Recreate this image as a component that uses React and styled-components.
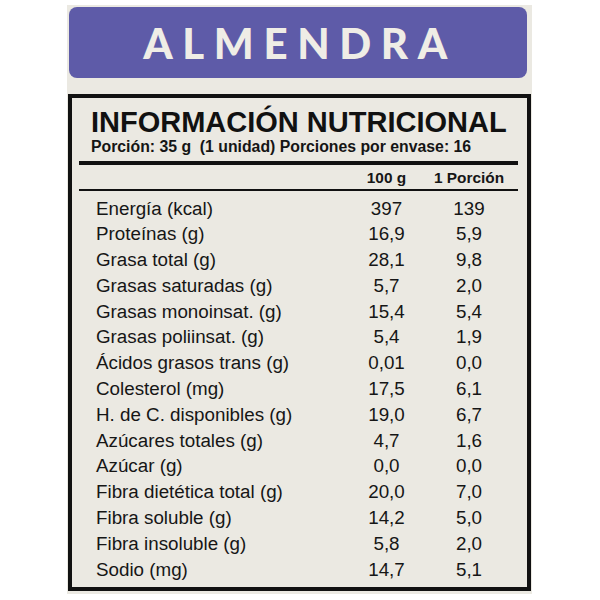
import React from "react";
import styled, { createGlobalStyle } from "styled-components";

const Global = createGlobalStyle`
  html, body { margin: 0; padding: 0; background: #ffffff; }
  body { font-family: "Liberation Sans", Arial, sans-serif; }
`;

const Card = styled.div`
  box-sizing: border-box;
  margin: 5px 0 0 67px;
  width: 465px;
  height: 589px;
  background: #ebe9e2;
  padding: 2px 0 3px 0;
  display: flex;
  flex-direction: column;
`;

const Banner = styled.div`
  box-sizing: border-box;
  margin-left: 2px;
  width: 458px;
  height: 71px;
  background: #5e5ba8;
  border-radius: 8px;
  display: flex;
  align-items: center;
  justify-content: center;
  padding-left: 4px;
`;

const BannerTitle = styled.h1`
  margin: 0;
  font-family: Lato, "Open Sans", sans-serif;
  font-weight: 900;
  font-size: 42px;
  line-height: 1;
  letter-spacing: 9.6px;
  color: #efede6;
`;

const Panel = styled.section`
  box-sizing: border-box;
  margin: 16px 0 0 1px;
  width: 463px;
  height: 497px;
  border: 4px solid #111111;
  color: #161616;
  display: flex;
  flex-direction: column;
`;

const Title = styled.h2`
  margin: 8px 0 0 19px;
  font-size: 29px;
  line-height: 32px;
  font-weight: 700;
  color: #111111;
`;

const Serving = styled.p`
  margin: 0 0 0 19px;
  font-size: 15.8px;
  line-height: 18px;
  font-weight: 700;
  white-space: pre;
  color: #151515;
`;

const Table = styled.div`
  margin: 5px 9px 0 7px;
  display: flex;
  flex-direction: column;
`;

const Rule = styled.div`
  height: ${(p) => p.$weight}px;
  background: #111111;
`;

const Grid = styled.div`
  display: grid;
  grid-template-columns: 1fr 67px 98px;
  align-items: center;
`;

const HeadRow = styled(Grid)`
  padding-top: 1.5px;
  font-size: 15.4px;
  line-height: 22px;
  font-weight: 700;
`;

const Body = styled.div`
  padding-top: 5px;
  display: flex;
  flex-direction: column;
`;

const Row = styled(Grid)`
  height: 25.8px;
  font-size: 18.8px;
  line-height: 25.8px;
`;

const Label = styled.span`
  padding-left: 17px;
  white-space: nowrap;
`;

const Num = styled.span`
  text-align: center;
  white-space: nowrap;
`;

const rows = [
  ["Energía (kcal)", "397", "139"],
  ["Proteínas (g)", "16,9", "5,9"],
  ["Grasa total (g)", "28,1", "9,8"],
  ["Grasas saturadas (g)", "5,7", "2,0"],
  ["Grasas monoinsat. (g)", "15,4", "5,4"],
  ["Grasas poliinsat. (g)", "5,4", "1,9"],
  ["Ácidos grasos trans (g)", "0,01", "0,0"],
  ["Colesterol (mg)", "17,5", "6,1"],
  ["H. de C. disponibles (g)", "19,0", "6,7"],
  ["Azúcares totales (g)", "4,7", "1,6"],
  ["Azúcar (g)", "0,0", "0,0"],
  ["Fibra dietética total (g)", "20,0", "7,0"],
  ["Fibra soluble (g)", "14,2", "5,0"],
  ["Fibra insoluble (g)", "5,8", "2,0"],
  ["Sodio (mg)", "14,7", "5,1"],
];

export default function App() {
  return (
    <>
      <Global />
      <Card>
        <Banner>
          <BannerTitle>ALMENDRA</BannerTitle>
        </Banner>
        <Panel>
          <Title>INFORMACIÓN NUTRICIONAL</Title>
          <Serving>{"Porción: 35 g  (1 unidad) Porciones por envase: 16"}</Serving>
          <Table>
            <Rule $weight={4} />
            <HeadRow>
              <span />
              <Num>100 g</Num>
              <Num>1 Porción</Num>
            </HeadRow>
            <Rule $weight={2} />
            <Body>
              {rows.map(([label, a, b]) => (
                <Row key={label}>
                  <Label>{label}</Label>
                  <Num>{a}</Num>
                  <Num>{b}</Num>
                </Row>
              ))}
            </Body>
          </Table>
        </Panel>
      </Card>
    </>
  );
}
